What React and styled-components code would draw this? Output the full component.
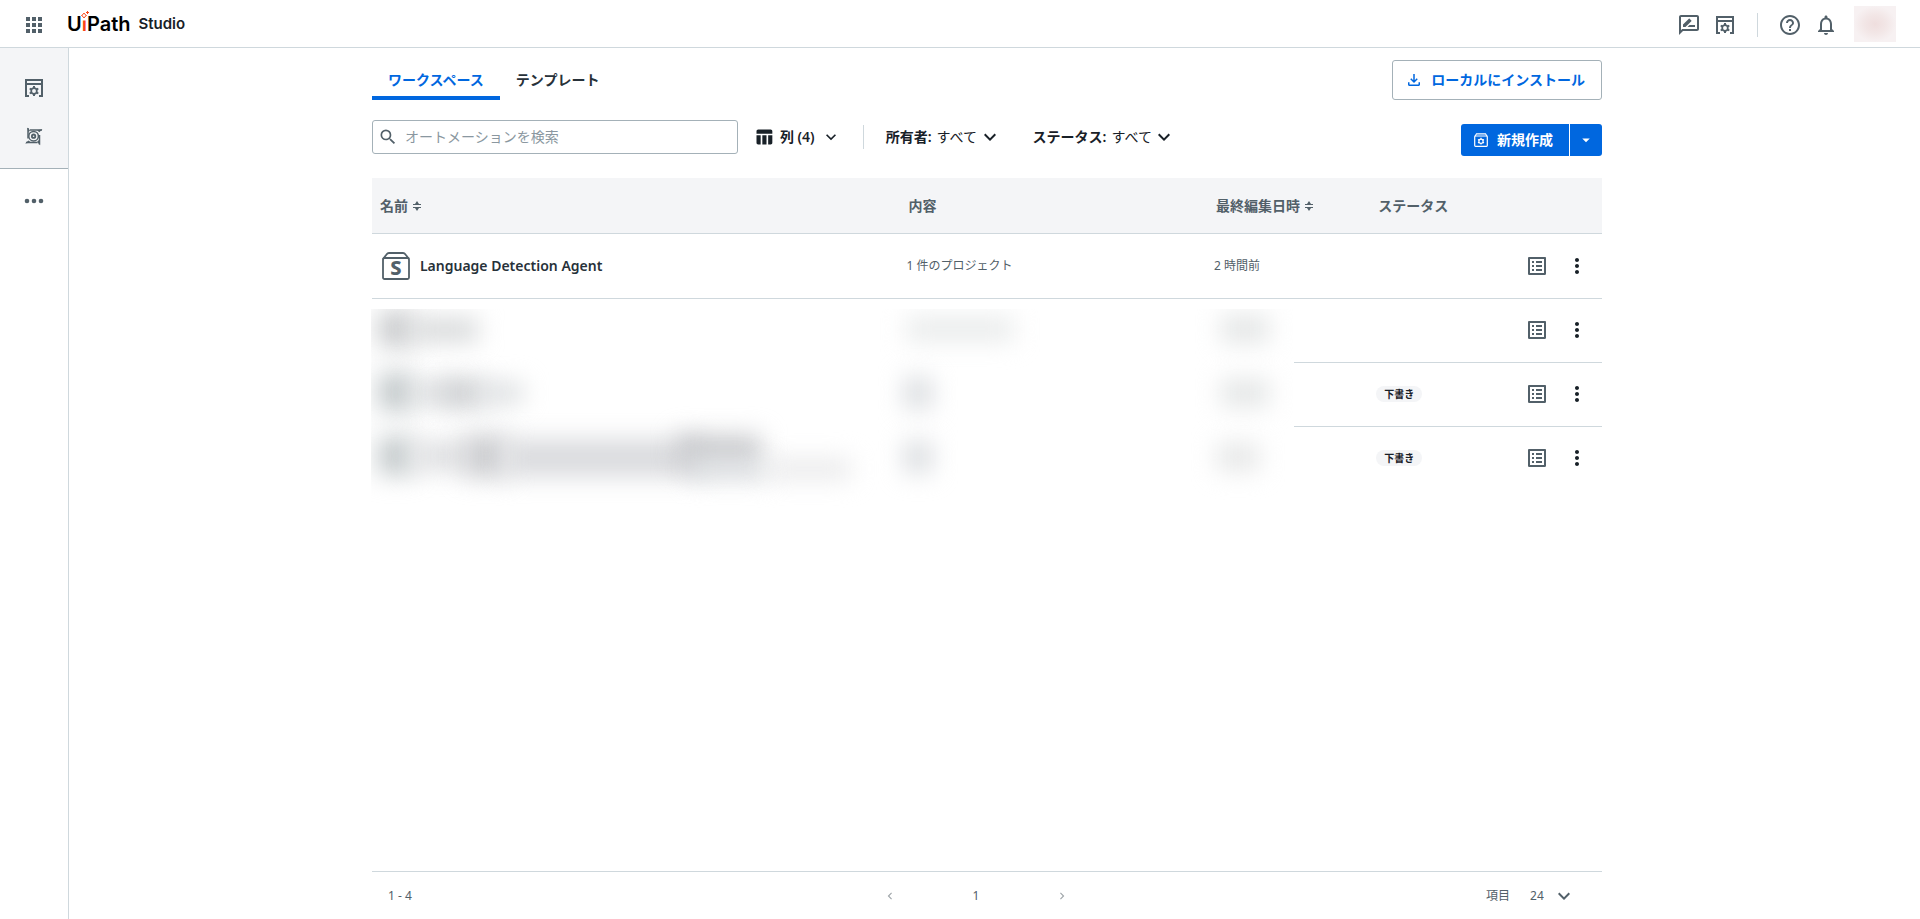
import React, { useState } from 'react';
import styled, { createGlobalStyle, css } from 'styled-components';
import {
  MdApps,
  MdArrowDropDown,
  MdChevronLeft,
  MdChevronRight,
  MdExpandMore,
  MdHelpOutline,
  MdMoreVert,
  MdNotificationsNone,
  MdOutlineFileDownload,
  MdOutlineListAlt,
  MdOutlineRateReview,
  MdSearch,
  MdTableChart,
} from 'react-icons/md';

const colors = {
  primary: '#0067df',
  text: '#273139',
  dark: '#182027',
  muted: '#526069',
  hint: '#8a97a0',
  line: '#cfd8dd',
  border: '#a4b1b8',
  panel: '#f4f5f7',
};

const GlobalStyle = createGlobalStyle`
  * {
    box-sizing: border-box;
  }
  body {
    margin: 0;
    background: #fff;
    color: ${colors.text};
    font-family: 'Noto Sans', 'Noto Sans CJK JP', sans-serif;
    font-size: 14px;
    line-height: 20px;
  }
  button, input, select {
    font: inherit;
    color: inherit;
    margin: 0;
  }
  svg {
    display: block;
    flex: none;
  }
`;

// Page frame
const Page = styled.div`
  min-height: 100vh;
  display: flex;
  flex-direction: column;
`;

const Header = styled.header`
  display: flex;
  align-items: center;
  justify-content: space-between;
  height: 48px;
  padding: 2px 24px 0 22px;
  border-bottom: 1px solid ${colors.line};
`;

const HeaderGroup = styled.div`
  display: flex;
  align-items: center;
  gap: ${(props) => props.$gap || 12}px;
`;

const IconButton = styled.button`
  display: flex;
  align-items: center;
  justify-content: center;
  min-width: 24px;
  height: 24px;
  padding: 0;
  border: 0;
  background: none;
  color: ${(props) => props.$color || colors.muted};
  cursor: pointer;
`;

const Brand = styled.a`
  display: flex;
  align-items: center;
  gap: 8px;
  padding-bottom: 2px;
  color: #000;
  font-family: Inter, sans-serif;
  text-decoration: none;
`;

const BrandName = styled.span`
  font-size: 20px;
  font-weight: 600;
  line-height: 24px;
`;

const BrandLetter = styled.span`
  position: relative;
  color: #fa4616;
`;

// Hides the dot of the i, the spark takes its place
const Stem = styled.span`
  display: inline-block;
  clip-path: inset(9px 0 0 0);
`;

const SparkIcon = styled.svg`
  position: absolute;
  left: -2px;
  top: -1px;
`;

const ProductName = styled.span`
  color: ${colors.dark};
  font-size: 15px;
  font-weight: 600;
`;

const Divider = styled.span`
  width: 1px;
  height: 24px;
  margin: 0 ${(props) => props.$space}px;
  background: ${colors.line};
`;

const Avatar = styled.button`
  width: 42px;
  height: 36px;
  margin: 0 0 2px 4px;
  padding: 0;
  border: 0;
  background: radial-gradient(closest-side, #efdede, #f2e6e6 50%, #f7f1f2 100%);
`;

const Body = styled.div`
  flex: 1;
  display: flex;
`;

const Sidebar = styled.nav`
  width: 69px;
  border-right: 1px solid ${colors.line};
`;

const SidebarGroup = styled.div`
  display: flex;
  flex-direction: column;
  align-items: center;
  gap: 24px;
  padding: 28px 0 20px;
  background: ${colors.panel};
  border-bottom: 1px solid ${colors.border};
`;

const SidebarMore = styled.div`
  display: flex;
  justify-content: center;
  padding: 20px 0;
`;

const Main = styled.main`
  flex: 1;
  display: flex;
  justify-content: center;
  padding: 12px 15px 0 0;
`;

const Content = styled.div`
  width: 67%;
  display: flex;
  flex-direction: column;
`;

// Tabs
const TopRow = styled.div`
  display: flex;
  justify-content: space-between;
  margin-bottom: 20px;
`;

const Tabs = styled.div`
  display: flex;
`;

const Tab = styled.button`
  height: 40px;
  padding: 4px 16px 0;
  border: 0;
  border-bottom: 4px solid transparent;
  background: none;
  font-weight: 600;
  cursor: pointer;

  ${(props) =>
    props.$active &&
    css`
      color: ${colors.primary};
      border-color: ${colors.primary};
    `}
`;

const InstallButton = styled.button`
  display: flex;
  align-items: center;
  gap: 8px;
  height: 40px;
  padding: 0 16px 0 12px;
  border: 1px solid ${colors.border};
  border-radius: 3px;
  background: #fff;
  color: ${colors.primary};
  font-weight: 600;
`;

// Toolbar
const Toolbar = styled.div`
  display: flex;
  align-items: flex-start;
  height: 36px;
  margin-bottom: 22px;
`;

const SearchBox = styled.label`
  display: flex;
  align-items: center;
  gap: 7px;
  flex: 0 1 366px;
  height: 34px;
  margin-right: 16px;
  padding: 0 5px;
  border: 1px solid ${colors.border};
  border-radius: 3px;
  color: ${colors.muted};
`;

const SearchInput = styled.input`
  flex: 1;
  min-width: 0;
  border: 0;
  outline: 0;
  padding: 0;
  background: none;

  &::placeholder {
    color: ${colors.hint};
    opacity: 1;
  }
`;

const Filters = styled.div`
  display: flex;
  align-items: center;
  height: 34px;
  color: ${colors.dark};
`;

const ColumnsButton = styled.button`
  display: flex;
  align-items: center;
  gap: 6px;
  padding: 0;
  border: 0;
  background: none;
  font-weight: 600;
`;

const Field = styled.div`
  display: flex;
  align-items: center;
  gap: ${(props) => props.$gap || 5}px;
  margin-right: ${(props) => props.$space || 0}px;

  label {
    font-weight: ${(props) => (props.$strong ? 600 : 400)};
  }
`;

const SelectWrap = styled.span`
  display: flex;
  align-items: center;

  svg {
    margin-left: -24px;
    pointer-events: none;
  }
`;

const Select = styled.select`
  appearance: none;
  border: 0;
  outline: 0;
  padding: 0 ${(props) => props.$end || 23}px 0 0;
  background: none;
`;

const CreateGroup = styled.div`
  display: flex;
  align-self: flex-end;
  gap: 1px;
  margin-left: auto;
`;

const CreateButton = styled.button`
  display: flex;
  align-items: center;
  justify-content: center;
  gap: 8px;
  height: 32px;
  padding: 0 ${(props) => (props.$menu ? 7 : 16)}px 0 ${(props) => (props.$menu ? 7 : 12)}px;
  border: 0;
  border-radius: ${(props) => (props.$menu ? '0 3px 3px 0' : '3px 0 0 3px')};
  background: ${colors.primary};
  color: #fff;
  font-weight: 600;
`;

// Table
const TableArea = styled.div`
  position: relative;
  flex: 1;
`;

const Table = styled.table`
  width: 100%;
  table-layout: fixed;
  border-collapse: separate;
  border-spacing: 0;
`;

const HeadCell = styled.th`
  width: ${(props) => props.$width || 'auto'};
  height: 56px;
  padding: 0 0 0 ${(props) => (props.$first ? 8 : 10)}px;
  border-bottom: 1px solid ${colors.line};
  background: ${colors.panel};
  color: ${colors.muted};
  font-weight: 600;
  text-align: left;
`;

const SortButton = styled.button`
  display: flex;
  align-items: center;
  gap: 5px;
  padding: 0;
  border: 0;
  background: none;
  font-weight: 600;
`;

const Cell = styled.td`
  height: 64px;
  padding: 0 0 0 8px;
  color: ${colors.muted};
  font-size: 12px;
`;

const Row = styled.tr`
  & + & > ${Cell} {
    padding-bottom: 2px;
    border-top: 1px solid ${colors.line};
  }
`;

const NameLink = styled.a`
  display: flex;
  align-items: center;
  gap: 8px;
  color: ${colors.text};
  font-size: 14px;
  font-weight: 600;
  text-decoration: none;
`;

const Badge = styled.span`
  display: inline-block;
  padding: 0 8px;
  border-radius: 8px;
  background: ${colors.panel};
  color: ${colors.dark};
  font-size: 10px;
  font-weight: 700;
  line-height: 16px;
  vertical-align: middle;
`;

const Actions = styled.div`
  display: flex;
  justify-content: flex-end;
  gap: 16px;
  padding-right: 13px;
`;

// Hides the private rows
const Redaction = styled.div`
  position: absolute;
  top: 131px;
  left: -1px;
  width: 75%;
  height: 200px;
  overflow: hidden;
  background: #fff;
`;

const Smudge = styled.span`
  position: absolute;
  left: ${(props) => props.$x}px;
  top: ${(props) => props.$y}px;
  width: ${(props) => props.$w}px;
  height: ${(props) => props.$h}px;
  background: ${(props) => props.$tone};
  filter: blur(12px);
`;

// Pagination
const Footer = styled.footer`
  display: grid;
  grid-template-columns: 1fr auto 1fr;
  align-items: center;
  height: 48px;
  padding: 0 26px 0 16px;
  border-top: 1px solid ${colors.line};
  color: ${colors.muted};
  font-size: 12px;
`;

const Pager = styled.div`
  display: flex;
  align-items: center;
  gap: 71px;
  margin-right: 12px;
`;

const PageSize = styled.div`
  display: flex;
  justify-content: flex-end;
`;

const StudioIcon = () => (
  <svg width="24" height="24" viewBox="0 0 24 24" fill="none" stroke="currentColor" strokeWidth="2">
    <path d="M7 20H4V4h16v16h-3M4 8h16" />
    <circle cx="12" cy="15" r="2.800" strokeWidth="1.700" />
    <path
      strokeWidth="2"
      d="M12 10v2M12 18v2M7.700 12.500l1.700 1M14.600 16.500l1.700 1M7.700 17.500l1.700-1M14.600 13.500l1.700-1"
    />
  </svg>
);

const ApertureIcon = () => (
  <svg width="24" height="24" viewBox="0 0 24 24" fill="none" stroke="currentColor" strokeWidth="1.500">
    <path d="M6 4v10.500M8 6h12M17.500 20.500V11M15.500 18.500H4" />
    <path
      fill="currentColor"
      stroke="none"
      d="M5.200 3.500L8 6.200 6.500 8.500zM20.500 5.200l-3.200 3-2.300-2zM18.300 21.200L15 18l2-2zM3 19.400l3.500-3 2.500 2z"
    />
    <circle cx="11.600" cy="12.200" r="4.800" />
    <circle cx="11.600" cy="12.200" r="1.700" strokeWidth="1.800" />
  </svg>
);

const DotsIcon = () => (
  <svg width="24" height="24" viewBox="0 0 24 24" fill="currentColor">
    <circle cx="5" cy="12" r="2.300" />
    <circle cx="12" cy="12" r="2.300" />
    <circle cx="19" cy="12" r="2.300" />
  </svg>
);

const SolutionIcon = () => (
  <svg width="32" height="32" viewBox="0 0 32 32" fill="none" stroke={colors.muted} strokeWidth="1.800">
    <rect x="3" y="8" width="26" height="21" rx="1.500" />
    <path d="M3 9L6.500 4.500Q7.500 3 9 3h14q1.500 0 2.500 1.500L29 9" />
    <text
      x="16"
      y="25"
      textAnchor="middle"
      fill={colors.muted}
      stroke="none"
      fontSize="20"
      fontWeight="800"
      fontFamily="Noto Sans, sans-serif"
    >
      S
    </text>
  </svg>
);

const CreateIcon = () => (
  <svg width="16" height="16" viewBox="0 0 16 16" fill="none" stroke="currentColor" strokeWidth="1.200">
    <rect x="1.700" y="4" width="12.600" height="10.400" rx="0.800" />
    <path d="M2 4.200L3.500 1.800h9L14 4.200" />
    <circle cx="8" cy="9.200" r="2.100" />
    <path d="M8 5.800v1.200M8 11.400v1.200M5 7.500l1.100.6M9.900 10.300l1.100.6M5 10.900l1.100-.6M9.900 8.100l1.100-.6" />
  </svg>
);

const SortIcon = () => (
  <svg width="8" height="10" viewBox="0 0 8 10" fill="currentColor">
    <path d="M4 0l2 3h2v1H0V3h2zM4 10L2 7H0V6h8v1H6z" />
  </svg>
);

const ROWS = [
  { name: 'Language Detection Agent', content: '1 件のプロジェクト', edited: '2 時間前' },
  {},
  { status: '下書き' },
  { status: '下書き' },
];

// x, y, width, height, tone
const SMUDGES = [
  [7, 2, 36, 36, '#caccce'],
  [41, 10, 66, 22, '#d4d6d7'],
  [7, 64, 36, 38, '#c4cacc'],
  [41, 74, 44, 20, '#d8dadc'],
  [70, 70, 44, 28, '#cdcfd2'],
  [110, 74, 42, 20, '#d9dcde'],
  [7, 128, 36, 38, '#c4cacc'],
  [41, 132, 60, 30, '#dfe0e2'],
  [93, 126, 44, 42, '#cccdd0'],
  [133, 130, 200, 38, '#dadbde'],
  [306, 126, 84, 32, '#cacbce'],
  [320, 152, 76, 18, '#dcdfe2'],
  [396, 150, 84, 20, '#e9e9ea'],
  [535, 8, 108, 24, '#e9ebeb'],
  [533, 68, 28, 32, '#dadde0'],
  [533, 132, 28, 32, '#dadde0'],
  [850, 6, 48, 28, '#e4e6e6'],
  [850, 70, 48, 28, '#e4e6e6'],
  [846, 134, 42, 28, '#e6e7e7'],
];

const FilterSelect = ({ id, label, space }) => (
  <Field $strong $space={space}>
    <label htmlFor={id}>{label}:</label>
    <SelectWrap>
      <Select id={id} defaultValue="all">
        <option value="all">すべて</option>
      </Select>
      <MdExpandMore size={24} />
    </SelectWrap>
  </Field>
);

const App = () => {
  const [tab, setTab] = useState('workspace');
  const [query, setQuery] = useState('');

  return (
    <Page>
      <GlobalStyle />
      <Header>
        <HeaderGroup $gap={21}>
          <IconButton aria-label="アプリ">
            <MdApps size={24} />
          </IconButton>
          <Brand href="#">
            <BrandName>
              U
              <BrandLetter>
                <Stem>i</Stem>
                <SparkIcon width="10" height="8" viewBox="0 0 10 8" fill="none" stroke="currentColor">
                  <path d="M4 2l1 1.500 1.500 1L5 5.500 4 7 3 5.500l-1.500-1L3 3.500z" />
                  <path d="M7.500 0v3M6 1.500h3" />
                </SparkIcon>
              </BrandLetter>
              Path
            </BrandName>
            <ProductName>Studio</ProductName>
          </Brand>
        </HeaderGroup>
        <HeaderGroup>
          <IconButton aria-label="フィードバック">
            <MdOutlineRateReview size={24} />
          </IconButton>
          <IconButton aria-label="Studio">
            <StudioIcon />
          </IconButton>
          <Divider $space={8} />
          <IconButton aria-label="ヘルプ">
            <MdHelpOutline size={24} />
          </IconButton>
          <IconButton aria-label="通知">
            <MdNotificationsNone size={24} />
          </IconButton>
          <Avatar aria-label="アカウント" />
        </HeaderGroup>
      </Header>

      <Body>
        <Sidebar>
          <SidebarGroup>
            <IconButton aria-label="ワークスペース">
              <StudioIcon />
            </IconButton>
            <IconButton aria-label="オートメーション">
              <ApertureIcon />
            </IconButton>
          </SidebarGroup>
          <SidebarMore>
            <IconButton aria-label="その他">
              <DotsIcon />
            </IconButton>
          </SidebarMore>
        </Sidebar>

        <Main>
          <Content>
            <TopRow>
              <Tabs role="tablist">
                <Tab
                  role="tab"
                  aria-selected={tab === 'workspace'}
                  $active={tab === 'workspace'}
                  onClick={() => setTab('workspace')}
                >
                  ワークスペース
                </Tab>
                <Tab
                  role="tab"
                  aria-selected={tab === 'template'}
                  $active={tab === 'template'}
                  onClick={() => setTab('template')}
                >
                  テンプレート
                </Tab>
              </Tabs>
              <InstallButton>
                <MdOutlineFileDownload size={18} />
                ローカルにインストール
              </InstallButton>
            </TopRow>

            <Toolbar>
              <SearchBox>
                <MdSearch size={20} />
                <SearchInput
                  type="text"
                  aria-label="検索"
                  placeholder="オートメーションを検索"
                  value={query}
                  onChange={(e) => setQuery(e.target.value)}
                />
              </SearchBox>
              <Filters>
                <ColumnsButton>
                  <MdTableChart size={20} />
                  列 (4)
                  <MdExpandMore size={20} />
                </ColumnsButton>
                <Divider $space={22} />
                <FilterSelect id="owner" label="所有者" space={31} />
                <FilterSelect id="status" label="ステータス" />
              </Filters>
              <CreateGroup>
                <CreateButton>
                  <CreateIcon />
                  新規作成
                </CreateButton>
                <CreateButton $menu aria-label="作成メニュー">
                  <MdArrowDropDown size={18} />
                </CreateButton>
              </CreateGroup>
            </Toolbar>

            <TableArea>
              <Table>
                <thead>
                  <tr>
                    <HeadCell $first $width="42.8%">
                      <SortButton>
                        名前
                        <SortIcon />
                      </SortButton>
                    </HeadCell>
                    <HeadCell $width="25%">内容</HeadCell>
                    <HeadCell $width="13.2%">
                      <SortButton>
                        最終編集日時
                        <SortIcon />
                      </SortButton>
                    </HeadCell>
                    <HeadCell>ステータス</HeadCell>
                    <HeadCell aria-label="操作" />
                  </tr>
                </thead>
                <tbody>
                  {ROWS.map((row, index) => (
                    <Row key={index}>
                      <Cell>
                        {row.name && (
                          <NameLink href="#">
                            <SolutionIcon />
                            {row.name}
                          </NameLink>
                        )}
                      </Cell>
                      <Cell>{row.content}</Cell>
                      <Cell>{row.edited}</Cell>
                      <Cell>{row.status && <Badge>{row.status}</Badge>}</Cell>
                      <Cell>
                        <Actions>
                          <IconButton aria-label="詳細">
                            <MdOutlineListAlt size={24} />
                          </IconButton>
                          <IconButton $color={colors.dark} aria-label="メニュー">
                            <MdMoreVert size={24} />
                          </IconButton>
                        </Actions>
                      </Cell>
                    </Row>
                  ))}
                </tbody>
              </Table>
              <Redaction aria-hidden="true">
                {SMUDGES.map(([x, y, w, h, tone], index) => (
                  <Smudge key={index} $x={x} $y={y} $w={w} $h={h} $tone={tone} />
                ))}
              </Redaction>
            </TableArea>

            <Footer>
              <span>1 - 4</span>
              <Pager>
                <IconButton $color="#a0a6aa" aria-label="前のページ">
                  <MdChevronLeft size={14} />
                </IconButton>
                <span>1</span>
                <IconButton $color="#a0a6aa" aria-label="次のページ">
                  <MdChevronRight size={14} />
                </IconButton>
              </Pager>
              <PageSize>
                <Field $gap={20}>
                  <label htmlFor="page-size">項目</label>
                  <SelectWrap>
                    <Select id="page-size" defaultValue="24" $end={32}>
                      <option value="24">24</option>
                    </Select>
                    <MdExpandMore size={24} />
                  </SelectWrap>
                </Field>
              </PageSize>
            </Footer>
          </Content>
        </Main>
      </Body>
    </Page>
  );
};

export default App;
